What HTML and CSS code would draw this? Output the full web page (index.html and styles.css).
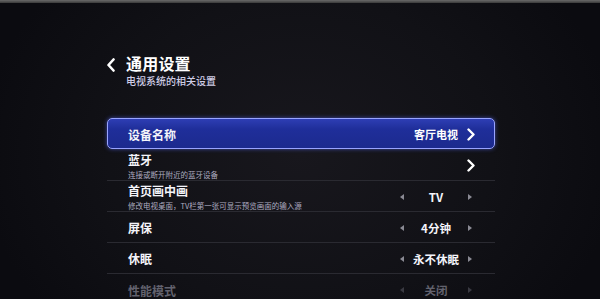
FILE: index.html
```html
<!DOCTYPE html>
<html lang="zh">
<head>
<meta charset="utf-8">
<link rel="stylesheet" href="styles.css">
</head>
<body>
<div class="bezel"></div>
<div class="screen">
  <div class="panel">
    <div class="header">
      <svg class="back" width="10" height="14" viewBox="0 0 10 14"><path d="M7.5 1.5 L2.5 7 L7.5 12.5" fill="none" stroke="#fff" stroke-width="2.6" stroke-linecap="round" stroke-linejoin="round"/></svg>
      <div class="titles">
        <div class="title">通用设置</div>
        <div class="subtitle">电视系统的相关设置</div>
      </div>
    </div>
    <div class="list">
      <div class="row selected">
        <div class="label"><div class="name">设备名称</div></div>
        <div class="right"><span class="val">客厅电视</span><svg class="arrow" width="10" height="13" viewBox="0 0 10 13"><path d="M2.5 1.5 L7.5 6.5 L2.5 11.5" fill="none" stroke="#fff" stroke-width="2.4" stroke-linecap="round" stroke-linejoin="round"/></svg></div>
      </div>
      <div class="row">
        <div class="label"><div class="name">蓝牙</div><div class="desc">连接或断开附近的蓝牙设备</div></div>
        <div class="right"><svg class="arrow" width="10" height="13" viewBox="0 0 10 13"><path d="M2.5 1.5 L7.5 6.5 L2.5 11.5" fill="none" stroke="#fff" stroke-width="2.4" stroke-linecap="round" stroke-linejoin="round"/></svg></div>
      </div>
      <div class="row">
        <div class="label"><div class="name">首页画中画</div><div class="desc">修改电视桌面，TV栏第一张可显示预览画面的输入源</div></div>
        <div class="picker"><span class="tri l"></span><span class="pv">TV</span><span class="tri r"></span></div>
      </div>
      <div class="row">
        <div class="label"><div class="name">屏保</div></div>
        <div class="picker"><span class="tri l"></span><span class="pv">4分钟</span><span class="tri r"></span></div>
      </div>
      <div class="row">
        <div class="label"><div class="name">休眠</div></div>
        <div class="picker"><span class="tri l"></span><span class="pv">永不休眠</span><span class="tri r"></span></div>
      </div>
      <div class="row dim">
        <div class="label"><div class="name">性能模式</div></div>
        <div class="picker"><span class="tri l"></span><span class="pv">关闭</span><span class="tri r"></span></div>
      </div>
    </div>
  </div>
</div>
</body>
</html>
```
FILE: styles.css
```css
html, body {
  margin: 0;
  padding: 0;
}
body {
  width: 600px;
  height: 299px;
  overflow: hidden;
  background: #0d0d12;
  font-family: "Noto Sans CJK SC", "Noto Sans", sans-serif;
  color: #fff;
}
.bezel {
  height: 3px;
  background: linear-gradient(#6a6a6a, #3a3a3a);
}
.screen {
  height: 296px;
  background: radial-gradient(ellipse 320px 260px at 300px 150px, #18171d 0%, #111116 60%, #0b0b10 100%);
  overflow: hidden;
}
.panel {
  margin-left: 106px;
  width: 389px;
  padding-top: 50px;
}
.header {
  display: flex;
  align-items: flex-start;
}
.back {
  margin-top: 5px;
  margin-right: 10px;
}
.titles {
  display: flex;
  flex-direction: column;
}
.title {
  font-size: 16px;
  line-height: 21px;
  font-weight: 700;
  letter-spacing: 0.2px;
}
.subtitle {
  font-size: 10px;
  line-height: 13px;
  font-weight: 500;
  color: #cfcde6;
}
.list {
  margin-top: 31px;
  margin-left: 1px;
  display: flex;
  flex-direction: column;
}
.row {
  box-sizing: border-box;
  height: 31px;
  display: flex;
  align-items: center;
  justify-content: space-between;
  padding: 1px 19px 0 21px;
  border-bottom: 1px solid #2a2a31;
}
.row.selected {
  border: 1px solid #98a3ff;
  border-radius: 5px;
  background: linear-gradient(#2e3eb4 0%, #1f2e9a 35%, #1c2a8e 100%);
  box-shadow: 0 0 4px rgba(90, 110, 255, 0.6);
  padding-left: 20px;
  padding-right: 18px;
  margin-bottom: 1px;
}
.label {
  display: flex;
  flex-direction: column;
}
.name {
  font-size: 12px;
  line-height: 15px;
  font-weight: 700;
  color: #f4f4fa;
}
.desc {
  font-size: 7.5px;
  line-height: 10px;
  margin-top: 3px;
  color: #aeacc0;
}
.right {
  display: flex;
  align-items: center;
  gap: 8px;
}
.val {
  font-size: 11px;
  font-weight: 700;
}
.arrow {
  display: block;
}
.picker {
  width: 72px;
  display: flex;
  align-items: center;
  justify-content: space-between;
  margin-right: 4px;
}
.pv {
  font-size: 11.5px;
  font-weight: 700;
  color: #f4f4fa;
}
.tri {
  width: 0;
  height: 0;
  border-top: 3px solid transparent;
  border-bottom: 3px solid transparent;
}
.tri.l {
  border-right: 4px solid #8a8a94;
}
.tri.r {
  border-left: 4px solid #8a8a94;
}
.row.dim .name, .row.dim .pv {
  color: #62626e;
}
.row.dim .tri.l { border-right-color: #3a3a42; }
.row.dim .tri.r { border-left-color: #3a3a42; }
.row.dim { border-bottom: none; }
```
